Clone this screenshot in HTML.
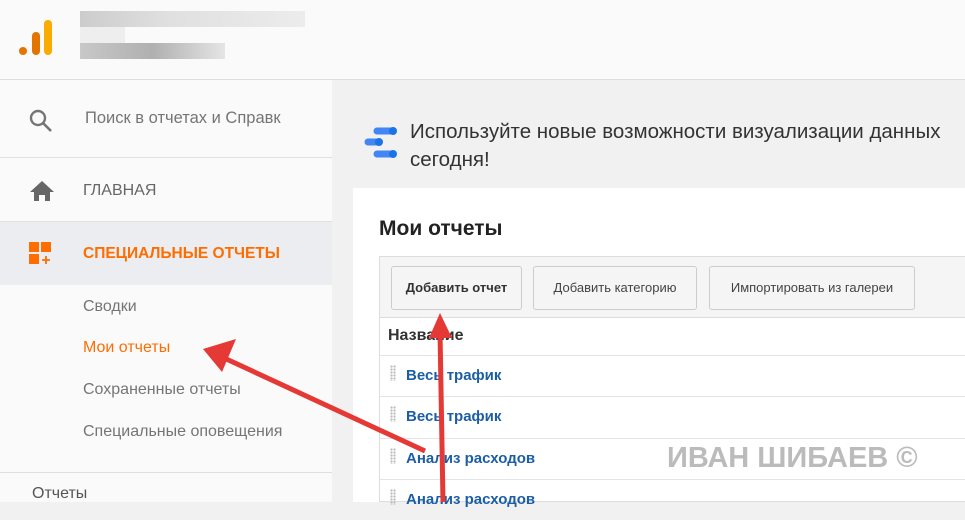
<!DOCTYPE html>
<html><head><meta charset="utf-8"><style>
*{margin:0;padding:0;box-sizing:border-box}
body{width:965px;height:502px;overflow:hidden;background:#f1f1f1;font-family:"Liberation Sans",Roboto,sans-serif;position:relative}
.abs{position:absolute}
.side{left:0;top:0;width:332px;height:502px;background:#fafafa}
.hdr{left:0;top:0;width:965px;height:80px;background:#fafafa;border-bottom:1px solid #ddd}
.t{position:absolute;white-space:nowrap}
.card{left:353px;top:188px;width:612px;height:314px;background:#fff}
.btn{position:absolute;top:266px;height:44px;border:1px solid #ccc;border-radius:3px;background:#f5f5f5;font-size:13px;color:#444;line-height:42px;text-align:center}
.row{position:absolute;left:380px;width:585px;border-top:1px solid #e4e4e4;height:41px}
.row span{position:absolute;left:26px;top:11px;font-size:15px;font-weight:bold;color:#1c5ea6}
.row i{position:absolute;left:10px;top:9px;width:6px;height:16px;background:radial-gradient(circle,#bbb 1px,transparent 1.3px) 0 0/3px 3px}
</style></head><body>
<div class="abs side"></div>
<div class="abs hdr"></div>
<svg class="abs" style="left:18px;top:18px" width="36" height="40"><circle cx="5" cy="33" r="4" fill="#e37400"/><rect x="14" y="14" width="8" height="23" rx="4" fill="#e37400"/><rect x="26" y="2" width="8" height="35" rx="4" fill="#f9ab00"/></svg>
<div class="abs" style="left:80px;top:11px;width:225px;height:16px;background:linear-gradient(90deg,#ccc,#e0e0e0 40%,#ececec)"></div>
<div class="abs" style="left:80px;top:27px;width:45px;height:16px;background:#eee"></div>
<div class="abs" style="left:80px;top:43px;width:145px;height:16px;background:linear-gradient(90deg,#c8c8c8,#b0b0b0 50%,#e5e5e5)"></div>
<div class="abs" style="left:0;top:157px;width:332px;height:1px;background:#e0e0e0"></div>
<div class="abs" style="left:0;top:221px;width:332px;height:64px;background:#ebedf0;border-top:1px solid #e0e0e0"></div>
<div class="abs" style="left:0;top:472px;width:332px;height:1px;background:#e0e0e0"></div>
<svg class="abs" style="left:28px;top:108px" width="26" height="26"><circle cx="10" cy="10" r="7" stroke="#757575" stroke-width="2.4" fill="none"/><line x1="15" y1="15" x2="23" y2="23" stroke="#757575" stroke-width="2.6"/></svg>
<div class="t" style="left:85px;top:109px;font-size:16.5px;color:#757575">Поиск в отчетах и Справк</div>
<svg class="abs" style="left:29px;top:180px" width="26" height="22"><path d="M13 1 L25 12 L21 12 L21 21 L16 21 L16 15 L10 15 L10 21 L5 21 L5 12 L1 12 Z" fill="#666"/></svg>
<div class="t" style="left:83px;top:182px;font-size:16px;color:#666">ГЛАВНАЯ</div>
<svg class="abs" style="left:29px;top:242px" width="25" height="25"><rect x="0" y="0" width="10" height="10" fill="#ff6d00"/><rect x="12" y="0" width="10" height="10" fill="#ff6d00"/><rect x="0" y="12" width="10" height="10" fill="#ff6d00"/><path d="M17 14v8M13 18h8" stroke="#ff6d00" stroke-width="1.8"/></svg>
<div class="t" style="left:83px;top:245px;font-size:15.5px;color:#ff6d00;font-weight:bold">СПЕЦИАЛЬНЫЕ ОТЧЕТЫ</div>
<div class="t" style="left:83px;top:298px;font-size:16px;color:#757575">Сводки</div>
<div class="t" style="left:83px;top:339px;font-size:16px;color:#ff6d00">Мои отчеты</div>
<div class="t" style="left:83px;top:381px;font-size:16px;color:#757575">Сохраненные отчеты</div>
<div class="t" style="left:83px;top:423px;font-size:16px;color:#757575">Специальные оповещения</div>
<div class="t" style="left:32px;top:485px;font-size:16px;color:#555">Отчеты</div>
<svg class="abs" style="left:362px;top:125px" width="40" height="40"><line x1="15" y1="6" x2="30" y2="6" stroke="#4285f4" stroke-width="7" stroke-linecap="round"/><line x1="6" y1="17" x2="16" y2="17" stroke="#4285f4" stroke-width="7" stroke-linecap="round"/><line x1="15" y1="29" x2="30" y2="29" stroke="#4285f4" stroke-width="7" stroke-linecap="round"/><circle cx="31" cy="6" r="4" fill="#1a73e8"/><circle cx="17" cy="17" r="4" fill="#1a73e8"/><circle cx="31" cy="29" r="4" fill="#1a73e8"/></svg>
<div class="t" style="left:410px;top:118px;font-size:20.5px;color:#333;line-height:28px">Используйте новые возможности визуализации данных<br>сегодня!</div>
<div class="abs card"></div>
<div class="t" style="left:379px;top:217px;font-size:21px;font-weight:bold;color:#222">Мои отчеты</div>
<div class="abs" style="left:379px;top:256px;width:586px;height:246px;border:1px solid #ddd;border-right:none;background:#fff"></div>
<div class="abs" style="left:380px;top:257px;width:585px;height:61px;background:#f5f5f5;border-bottom:1px solid #ddd"></div>
<div class="btn" style="left:391px;width:131px;font-weight:bold;color:#333">Добавить отчет</div>
<div class="btn" style="left:533px;width:164px">Добавить категорию</div>
<div class="btn" style="left:709px;width:206px">Импортировать из галереи</div>
<div class="t" style="left:388px;top:327px;font-size:16px;font-weight:bold;color:#333">Название</div>
<div class="row" style="top:355px"><i></i><span>Весь трафик</span></div>
<div class="row" style="top:396px"><i></i><span>Весь трафик</span></div>
<div class="row" style="top:438px"><i></i><span>Анализ расходов</span></div>
<div class="row" style="top:479px"><i></i><span>Анализ расходов</span></div>
<div class="t" style="left:667px;top:442px;font-size:29px;font-weight:bold;color:#bbb">ИВАН ШИБАЕВ ©</div>
<svg class="abs" style="left:0;top:0" width="965" height="502">
<line x1="425" y1="451" x2="222" y2="357" stroke="#e53935" stroke-width="5"/>
<polygon points="203,349 236,339 222,372" fill="#e53935"/>
<line x1="443" y1="502" x2="440" y2="332" stroke="#e53935" stroke-width="5"/>
<polygon points="440,313 429,338 452,338" fill="#e53935"/>
</svg>
</body></html>
